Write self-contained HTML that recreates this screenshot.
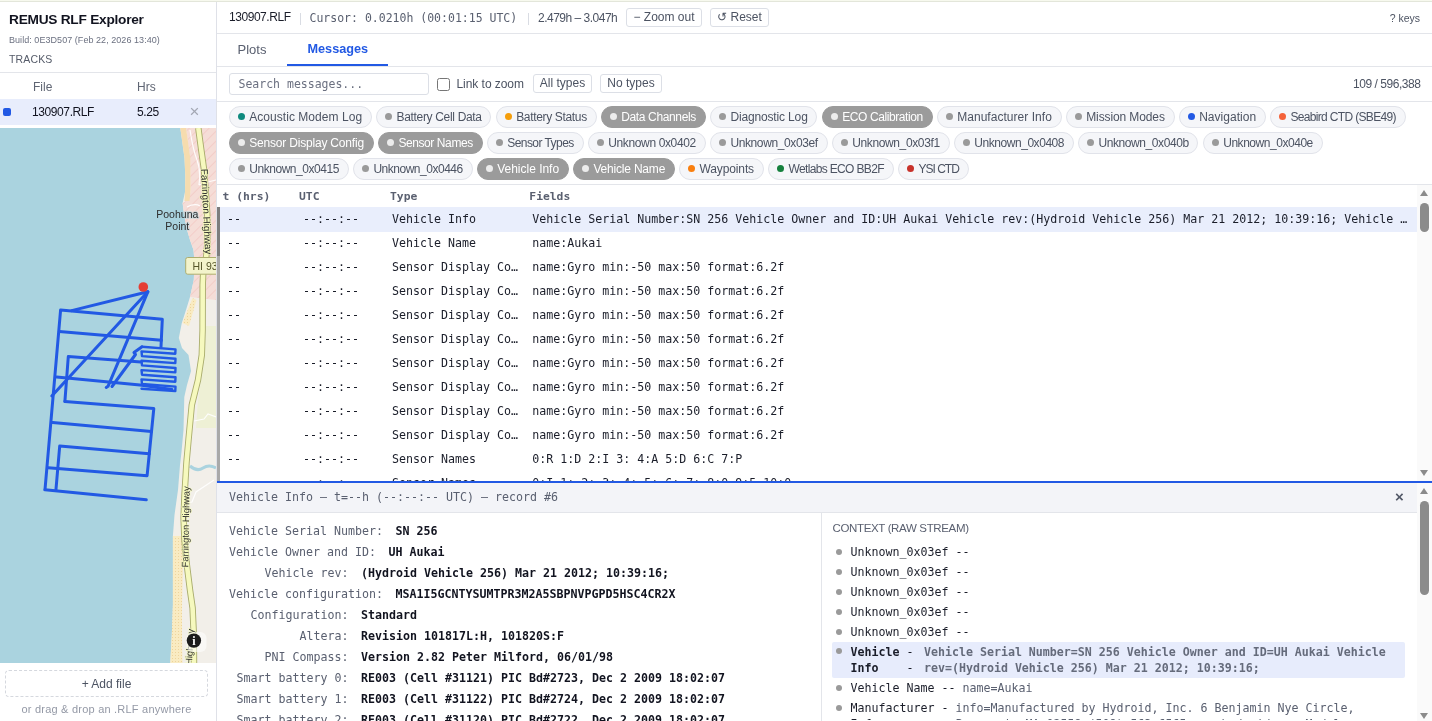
<!DOCTYPE html>
<html lang="en">
<head>
<meta charset="utf-8">
<title>REMUS RLF Explorer</title>
<style>
*{box-sizing:border-box;margin:0;padding:0}
html,body{width:1432px;height:721px;overflow:hidden;background:#fff}
body{font-family:"Liberation Sans",sans-serif;color:#1a1d29;position:relative;font-size:12px;will-change:transform}
.mono{font-family:"DejaVu Sans Mono","Liberation Mono",monospace}
.abs{position:absolute}
#topline{left:0;top:0;width:1432px;height:2px;background:linear-gradient(#f7f9ee 0,#f7f9ee 50%,#e3e6da 50%,#e3e6da 100%)}
/* sidebar */
#side{left:0;top:0;width:217px;height:721px;border-right:1px solid #dfe1e8;background:#fff}
#title{left:9px;top:12px;font-weight:bold;font-size:13.7px;letter-spacing:-0.25px;color:#11131f;white-space:nowrap}
#build{left:9px;top:35px;font-size:9px;letter-spacing:.05px;color:#6b7080;white-space:nowrap}
#tracks{left:9px;top:53px;font-size:10.5px;letter-spacing:.15px;color:#555b69;white-space:nowrap}
#sidehdr{left:0;top:72px;width:216px;height:27px;border-top:1px solid #e3e5ea;color:#5f6573;font-size:12px}
#siderow{left:0;top:99px;width:216px;height:26px;background:#e8edfc;font-size:12px;letter-spacing:-.4px;color:#11131f}
#map{left:0;top:128px;width:216px;height:535px;overflow:hidden;background:#aad3df}
#addfile{left:5px;top:670px;width:203px;height:27px;border:1px dashed #d5d8de;border-radius:4px;text-align:center;line-height:27px;font-size:12px;color:#4c5362}
#drag{left:0;top:703px;width:213px;text-align:center;font-size:11px;letter-spacing:.22px;color:#9499a6}
/* main */
#topbar{left:217px;top:2px;width:1215px;height:32px;border-bottom:1px solid #e3e5ea}
#tabs{left:217px;top:34px;width:1215px;height:33px;border-bottom:1px solid #e3e5ea}
#filter{left:217px;top:67px;width:1215px;height:35px;border-bottom:1px solid #e3e5ea}
#chips{left:217px;top:102px;width:1215px;height:83px;border-bottom:1px solid #e3e5ea}
.chip{position:absolute;height:22px;border:1px solid #e1e3ea;border-radius:11px;background:#f5f6f9;color:#4c5362;font-size:12px;line-height:20px;white-space:nowrap;padding-left:19.2px}
.chip i{position:absolute;left:8px;top:5.5px;width:7px;height:7px;border-radius:50%;background:#9a9a9a}
.chip.on{background:#9b9b9b;border-color:#9b9b9b;color:#fff}
.chip.on i{background:#ececec}
.btn{position:absolute;border:1px solid #dcdfe6;border-radius:3px;background:#fff;color:#4c5362;font-size:12px;white-space:nowrap;text-align:center}

#topbar .fn{left:12px;top:8px;font-size:12px;letter-spacing:-.45px;color:#1a1d29}
.sep{position:absolute;width:1px;height:12px;background:#d9dce3}
#cursor{left:92.5px;top:8.5px;font-size:11.5px;color:#5a6070;white-space:pre}
#range{left:321px;top:8.5px;font-size:12px;letter-spacing:-.5px;color:#4c5362;white-space:nowrap}
#keys{right:12px;top:10px;font-size:10.5px;color:#4c5362}
#tabs .t1{left:20.5px;top:8px;font-size:13px;color:#5a6070}
#tabs .t2{left:90.5px;top:8px;font-size:12.7px;font-weight:bold;color:#2259e4}
#tabs .ul{left:70px;top:30px;width:101px;height:2px;background:#2259e4}
#search{left:12px;top:6px;width:200px;height:22px;border:1px solid #dcdfe6;border-radius:3px;font-size:11.5px;color:#6b7080;line-height:20px;padding-left:8.5px}
#cb{left:220px;top:11px;width:13px;height:13px;border:1px solid #767676;border-radius:2.5px;background:#fff}
#ltz{left:239.5px;top:10px;font-size:12px;color:#4c5362;letter-spacing:-.05px;white-space:nowrap}
#count{right:11.5px;top:10px;font-size:12px;color:#4c5362;letter-spacing:-.45px;white-space:nowrap}

/* table */
#thead{left:217px;top:185px;width:1200px;height:22px;font-weight:bold;font-size:11.35px;color:#5a6070}
#thead span{position:absolute;top:4px;white-space:pre}
#tbody{left:217px;top:207px;width:1200px;height:274px;overflow:hidden;font-size:11.63px;color:#1a1d29}
.r{position:absolute;left:3px;width:1197px;height:24px;line-height:24px;white-space:pre}
.r.sel{background:#e9eefc;height:24.6px}
.r span{position:absolute;top:0;overflow:hidden}
.r .c1{left:7px}.r .c2{left:83px}.r .c3{left:172px}.r .c4{left:312.3px}
#lbar{left:217px;top:207px;width:3px;height:274px;background:#a9a9a9}
#lbar i{position:absolute;left:0;top:0;width:3px;height:49px;background:#7d7d7d}
.sbtrack{position:absolute;background:#fafafa}
.sbthumb{position:absolute;background:#8b8b8b;border-radius:5px}
.tri-up{position:absolute;width:0;height:0;border-left:4.6px solid transparent;border-right:4.6px solid transparent;border-bottom:6.5px solid #8b8b8b}
.tri-dn{position:absolute;width:0;height:0;border-left:4.6px solid transparent;border-right:4.6px solid transparent;border-top:6.5px solid #8b8b8b}
#blue{left:217px;top:481px;width:1215px;height:2px;background:#2259e4}
/* detail */
#dhead{left:217px;top:483px;width:1200px;height:30px;background:#f3f4f8;border-bottom:1px solid #e3e5ea;font-size:11.63px;color:#5a6070}
#dhead .t{position:absolute;left:12px;top:7px;white-space:pre}
#dhead .x{position:absolute;left:1178px;top:5px;font-family:"Liberation Sans",sans-serif;font-size:15px;font-weight:bold;color:#535968}
#dleft{left:217px;top:513px;width:605px;height:208px;overflow:hidden;font-size:11.63px;border-right:1px solid #e3e5ea}
.kv{position:absolute;left:12px;height:21px;line-height:21px;white-space:pre;display:flex}
.kv b{font-weight:bold;color:#11131f;margin-left:12.6px}
.kv span{min-width:119.5px;text-align:right;color:#5a6070}
#dright{left:823px;top:513px;width:594px;height:208px;overflow:hidden;font-size:11.63px}

#ctxh{position:absolute;left:9.5px;top:9px;font-family:"Liberation Sans",sans-serif;font-size:11.5px;letter-spacing:-.35px;color:#5a6070;white-space:nowrap}
.ci{position:absolute;left:9px;width:573px;white-space:pre;color:#1a1d29}
.ci i{position:absolute;left:4px;top:5px;width:6px;height:6px;border-radius:50%;background:#9a9a9a}
.ci span{position:absolute;left:18.5px;top:0;line-height:16.2px}
.ci em{font-style:normal;color:#5a6070}
.ci.hl{background:#e7ecfc;border-radius:2px}.ci.hl em{color:#656b7b}
</style>
</head>
<body>
<div id="side" class="abs">
  <div id="title" class="abs">REMUS RLF Explorer</div>
  <div id="build" class="abs">Build: 0E3D507 (Feb 22, 2026 13:40)</div>
  <div id="tracks" class="abs">TRACKS</div>
  <div id="sidehdr" class="abs"><span class="abs" style="left:33px;top:7px">File</span><span class="abs" style="left:137px;top:7px">Hrs</span></div>
  <div id="siderow" class="abs"><span class="abs" style="left:3px;top:9px;width:8px;height:8px;border-radius:2px;background:#2259e4"></span><span class="abs" style="left:32px;top:6px">130907.RLF</span><span class="abs" style="left:137px;top:6px">5.25</span><span class="abs" style="left:189.5px;top:3px;color:#a3a7b3;font-size:17px;letter-spacing:0">×</span></div>
  <div id="map" class="abs"><svg width="216" height="535" viewBox="0 128 216 535" style="position:absolute;left:0;top:0;display:block">
<defs>
<pattern id="hatch" width="7" height="7" patternUnits="userSpaceOnUse" patternTransform="rotate(-45)"><rect width="7" height="7" fill="#f5ddd7"/><rect width="7" height="0.8" fill="#f3cac4"/></pattern>
<pattern id="sand" width="3" height="3" patternUnits="userSpaceOnUse"><rect width="3" height="3" fill="#f9ebc2"/><rect x="1" y="1" width="1" height="1" fill="#edd49c"/></pattern>
</defs>
<rect x="0" y="128" width="216" height="535" fill="#aad3df"/>
<!-- land -->
<path d="M180.3,128 L182,140 L184.5,158 L185.3,176 L185,192 L182.6,203 L184,214 L186.5,228 L190,240 L193.5,250 L194.5,262 L193.8,280 L190,297 L186,310 L181.8,323 L178.8,338 L182,348 L188.5,355 L191,371 L187,385 L184.3,397 L183.5,430 L181.5,452 L180,465 L178,490 L174.5,515 L172.9,536 L172.9,605 L171.8,635 L170.3,663 L216,663 L216,128 Z" fill="#f2efe9"/>
<!-- pink hatched -->
<path d="M186,128 L190,158 L190.5,192 L186,201 L182.6,203 L184,214 L186.5,228 L190,240 L193.5,250 L194.5,262 L193.8,280 L190,297 L216,300 L216,128 Z" fill="url(#hatch)"/>
<!-- beach top -->
<path d="M180.3,128 L182,140 L184.5,158 L185.3,176 L185,192 L184.5,201 L189.5,201 L190.5,190 L190.3,158 L186,128 Z" fill="#f6dcae"/>
<path d="M192.5,298 L196.5,300 L189,326 L182.5,323 Z" fill="url(#sand)"/>
<!-- farmland -->
<path d="M206,326 L216,326 L216,428 L196,428 L198,400 L203,365 Z" fill="#eef0d5"/>
<!-- stream -->
<path d="M190,466 Q197,472 203,468 T216,468" fill="none" stroke="#aad3df" stroke-width="3"/>
<!-- beach bottom -->
<path d="M172.9,536 L183.5,536 L183,570 L182,605 L182,635 L182.5,663 L170.3,663 L171.8,635 L172.9,605 Z" fill="url(#sand)"/>
<!-- minor white roads -->
<path d="M190,130 Q193,150 197,160 T199,185 M199,185 Q206,182 216,180 M187,207 Q195,203 200,206" fill="none" stroke="#fff" stroke-width="1.2" opacity=".9"/>
<path d="M194,421 L204,419 L208,414 L216,417 M186,503 L192,502 L196,492 L214,480" fill="none" stroke="#fff" stroke-width="1.2" opacity=".9"/>
<!-- highway -->
<path id="hwy" d="M198.3,128 L201,148 L203.8,168 L205.8,192 L207.3,215 L207.4,243 L206.3,256 L203.3,271 L202.7,285 L202.6,330 L201.8,355 L198,380 L191.8,405 L188.5,440 L186.5,462 L184.5,495 L183.6,518 L184.5,540 L186.5,562 L190,590 L192.6,608 L193.8,635 L194,663" fill="none" stroke="#a9ac6c" stroke-width="6.4" stroke-linejoin="round"/>
<path d="M198.3,128 L201,148 L203.8,168 L205.8,192 L207.3,215 L207.4,243 L206.3,256 L203.3,271 L202.7,285 L202.6,330 L201.8,355 L198,380 L191.8,405 L188.5,440 L186.5,462 L184.5,495 L183.6,518 L184.5,540 L186.5,562 L190,590 L192.6,608 L193.8,635 L194,663" fill="none" stroke="#f6f9be" stroke-width="4.6" stroke-linejoin="round"/>
<!-- labels -->
<g font-family="'Liberation Sans',sans-serif" fill="#2d2d2d">
<text x="177.3" y="218" font-size="10.5" text-anchor="middle" stroke="#aad3df" stroke-width="1.5" paint-order="stroke" stroke-opacity=".6">Poohuna</text>
<text x="177.3" y="230" font-size="10.5" text-anchor="middle" stroke="#aad3df" stroke-width="1.5" paint-order="stroke" stroke-opacity=".6">Point</text>
<text font-size="9.9" transform="translate(201,169) rotate(87.2)" stroke="#f6f9be" stroke-width="1.6" paint-order="stroke" stroke-opacity=".75">Farrington Highway</text>
<text font-size="9.4" transform="translate(188.2,567.5) rotate(-89)" stroke="#f6f9be" stroke-width="1.6" paint-order="stroke" stroke-opacity=".75">Farrington Highway</text>
<text font-size="9.4" transform="translate(192,665) rotate(-87)" stroke="#f6f9be" stroke-width="1.6" paint-order="stroke" stroke-opacity=".75">Highway</text>
</g>
<!-- shield -->
<rect x="185.7" y="257.5" width="40" height="16.7" rx="2" fill="#f3f3cb" stroke="#adad6e" stroke-width="1"/>
<text x="192.5" y="270" font-family="'Liberation Sans',sans-serif" font-size="10.5" fill="#55552a">HI 93</text>
<!-- track -->
<g fill="none" stroke="#2259e4" stroke-width="3" stroke-linejoin="round" stroke-linecap="round">
<path d="M147.8,291.8 L71.6,310.6"/>
<path d="M147.8,291.8 L51.8,396"/>
<path d="M147.8,291.8 L108,386.3 L106.2,387.5"/>
<path d="M112,386.5 L135.5,354.5 L134,352.5 L142,346.8"/>
<path d="M45,489.6 L60.6,309.9 L162.3,319.2 L161,347"/>
<path d="M59.3,331.5 L161.4,340.3"/>
<path d="M64.9,401.4 L68.3,356.5 L141,362"/>
<path d="M56.6,377.1 L140,385 L172,389.5"/>
<path d="M64.9,401.4 L153.8,408.6 L147.1,475.7 L48.2,467.8"/>
<path d="M52.6,422.4 L151.4,431.5"/>
<path d="M55.9,490.4 L59.7,446.1 L149.2,453.8"/>
<path d="M45,489.8 L146.3,499.8"/>
<polyline points="142.0,346.8 175.5,349.4 175.3,353.8 141.5,351.4 142.0,356.1 175.5,358.7 175.3,363.1 141.5,360.8 142.0,365.4 175.5,368.0 175.3,372.4 141.5,370.1 142.0,374.7 175.5,377.3 175.3,381.8 141.5,379.4 142.0,384.0 175.5,386.6 175.3,391.1 141.5,388.7" stroke-width="2.4"/>
</g>
<circle cx="143.3" cy="287" r="4.8" fill="#e53e34"/>
<!-- info -->
<rect x="186.5" y="632" width="20" height="20" rx="6" fill="#fff" opacity=".55"/>
<circle cx="193.9" cy="640.6" r="7.2" fill="#1c1c1c"/>
<text x="193.9" y="645" font-family="'Liberation Serif',serif" font-weight="bold" font-size="12" fill="#fff" text-anchor="middle">i</text>
</svg></div>
  <div id="addfile" class="abs">+ Add file</div>
  <div id="drag" class="abs">or drag &amp; drop an .RLF anywhere</div>
</div>
<div id="topline" class="abs"></div>
<div id="topbar" class="abs"><span class="abs fn">130907.RLF</span><span class="sep" style="left:82.5px;top:11px"></span><span id="cursor" class="abs mono">Cursor: 0.0210h (00:01:15 UTC)</span><span class="sep" style="left:311px;top:11px"></span><span id="range" class="abs">2.479h – 3.047h</span><span class="btn" style="left:409px;top:6px;width:76px;height:19px;line-height:17px">− Zoom out</span><span class="btn" style="left:493px;top:6px;width:59px;height:19px;line-height:17px">↺ Reset</span><span id="keys" class="abs">? keys</span></div>
<div id="tabs" class="abs"><span class="abs t1">Plots</span><span class="abs t2">Messages</span><span class="abs ul"></span></div>
<div id="filter" class="abs"><span id="search" class="abs mono">Search messages...</span><span id="cb" class="abs"></span><span id="ltz" class="abs">Link to zoom</span><span class="btn" style="left:316px;top:7px;width:59px;height:19px;line-height:17px">All types</span><span class="btn" style="left:383px;top:7px;width:62px;height:19px;line-height:17px">No types</span><span id="count" class="abs">109 / 596,388</span></div>
<div id="chips" class="abs"><span class="chip" style="left:12.0px;top:4px;width:143.0px;letter-spacing:0.05px"><i style="background:#0f8a7e"></i>Acoustic Modem Log</span>
<span class="chip" style="left:159.4px;top:4px;width:115.1px;letter-spacing:-0.33px"><i></i>Battery Cell Data</span>
<span class="chip" style="left:279.0px;top:4px;width:100.6px;letter-spacing:-0.34px"><i style="background:#f59e0b"></i>Battery Status</span>
<span class="chip on" style="left:384.0px;top:4px;width:104.7px;letter-spacing:-0.36px"><i></i>Data Channels</span>
<span class="chip" style="left:493.2px;top:4px;width:107.3px;letter-spacing:-0.15px"><i></i>Diagnostic Log</span>
<span class="chip on" style="left:605.0px;top:4px;width:110.6px;letter-spacing:-0.41px"><i></i>ECO Calibration</span>
<span class="chip" style="left:720.0px;top:4px;width:124.7px;letter-spacing:0.04px"><i></i>Manufacturer Info</span>
<span class="chip" style="left:849.0px;top:4px;width:108.6px;letter-spacing:-0.11px"><i></i>Mission Modes</span>
<span class="chip" style="left:962.0px;top:4px;width:86.9px;letter-spacing:0.02px"><i style="background:#2259e4"></i>Navigation</span>
<span class="chip" style="left:1053.2px;top:4px;width:135.6px;letter-spacing:-0.66px"><i style="background:#f4623a"></i>Seabird CTD (SBE49)</span>
<span class="chip on" style="left:12.0px;top:30px;width:144.8px;letter-spacing:-0.19px"><i></i>Sensor Display Config</span>
<span class="chip on" style="left:161.2px;top:30px;width:104.4px;letter-spacing:-0.41px"><i></i>Sensor Names</span>
<span class="chip" style="left:270.0px;top:30px;width:96.5px;letter-spacing:-0.55px"><i></i>Sensor Types</span>
<span class="chip" style="left:371.0px;top:30px;width:117.7px;letter-spacing:-0.36px"><i></i>Unknown 0x0402</span>
<span class="chip" style="left:493.2px;top:30px;width:117.4px;letter-spacing:-0.38px"><i></i>Unknown_0x03ef</span>
<span class="chip" style="left:615.0px;top:30px;width:117.6px;letter-spacing:-0.37px"><i></i>Unknown_0x03f1</span>
<span class="chip" style="left:737.1px;top:30px;width:119.7px;letter-spacing:-0.45px"><i></i>Unknown_0x0408</span>
<span class="chip" style="left:861.3px;top:30px;width:120.2px;letter-spacing:-0.42px"><i></i>Unknown_0x040b</span>
<span class="chip" style="left:986.0px;top:30px;width:119.6px;letter-spacing:-0.46px"><i></i>Unknown_0x040e</span>
<span class="chip" style="left:12.0px;top:56px;width:119.7px;letter-spacing:-0.45px"><i></i>Unknown_0x0415</span>
<span class="chip" style="left:136.2px;top:56px;width:119.4px;letter-spacing:-0.48px"><i></i>Unknown_0x0446</span>
<span class="chip on" style="left:260.0px;top:56px;width:91.9px;letter-spacing:-0.01px"><i></i>Vehicle Info</span>
<span class="chip on" style="left:356.2px;top:56px;width:101.8px;letter-spacing:-0.19px"><i></i>Vehicle Name</span>
<span class="chip" style="left:462.4px;top:56px;width:84.4px;letter-spacing:-0.13px"><i style="background:#f97f0f"></i>Waypoints</span>
<span class="chip" style="left:551.3px;top:56px;width:125.4px;letter-spacing:-0.65px"><i style="background:#15803d"></i>Wetlabs ECO BB2F</span>
<span class="chip" style="left:681.2px;top:56px;width:70.5px;letter-spacing:-0.98px"><i style="background:#c8322b"></i>YSI CTD</span></div>
<div id="thead" class="abs mono"><span style="left:5.5px">t (hrs)</span><span style="left:82px">UTC</span><span style="left:173px">Type</span><span style="left:312.3px">Fields</span></div>
<div id="tbody" class="abs mono">
<div class="r sel" style="top:0.0px"><span class="c1">--</span><span class="c2">--:--:--</span><span class="c3">Vehicle Info</span><span class="c4">Vehicle Serial Number:SN 256 Vehicle Owner and ID:UH Aukai Vehicle rev:(Hydroid Vehicle 256) Mar 21 2012; 10:39:16; Vehicle …</span></div>
<div class="r" style="top:24.0px"><span class="c1">--</span><span class="c2">--:--:--</span><span class="c3">Vehicle Name</span><span class="c4">name:Aukai</span></div>
<div class="r" style="top:48.1px"><span class="c1">--</span><span class="c2">--:--:--</span><span class="c3">Sensor Display Co…</span><span class="c4">name:Gyro min:-50 max:50 format:6.2f</span></div>
<div class="r" style="top:72.1px"><span class="c1">--</span><span class="c2">--:--:--</span><span class="c3">Sensor Display Co…</span><span class="c4">name:Gyro min:-50 max:50 format:6.2f</span></div>
<div class="r" style="top:96.1px"><span class="c1">--</span><span class="c2">--:--:--</span><span class="c3">Sensor Display Co…</span><span class="c4">name:Gyro min:-50 max:50 format:6.2f</span></div>
<div class="r" style="top:120.2px"><span class="c1">--</span><span class="c2">--:--:--</span><span class="c3">Sensor Display Co…</span><span class="c4">name:Gyro min:-50 max:50 format:6.2f</span></div>
<div class="r" style="top:144.2px"><span class="c1">--</span><span class="c2">--:--:--</span><span class="c3">Sensor Display Co…</span><span class="c4">name:Gyro min:-50 max:50 format:6.2f</span></div>
<div class="r" style="top:168.2px"><span class="c1">--</span><span class="c2">--:--:--</span><span class="c3">Sensor Display Co…</span><span class="c4">name:Gyro min:-50 max:50 format:6.2f</span></div>
<div class="r" style="top:192.2px"><span class="c1">--</span><span class="c2">--:--:--</span><span class="c3">Sensor Display Co…</span><span class="c4">name:Gyro min:-50 max:50 format:6.2f</span></div>
<div class="r" style="top:216.3px"><span class="c1">--</span><span class="c2">--:--:--</span><span class="c3">Sensor Display Co…</span><span class="c4">name:Gyro min:-50 max:50 format:6.2f</span></div>
<div class="r" style="top:240.3px"><span class="c1">--</span><span class="c2">--:--:--</span><span class="c3">Sensor Names</span><span class="c4">0:R 1:D 2:I 3: 4:A 5:D 6:C 7:P</span></div>
<div class="r" style="top:264.3px"><span class="c1">--</span><span class="c2">--:--:--</span><span class="c3">Sensor Names</span><span class="c4">0:I 1: 2: 3: 4: 5: 6: 7: 8:0 9:5 10:0</span></div>
</div>
<div id="lbar" class="abs"><i></i></div>
<div class="sbtrack" style="left:1417px;top:185px;width:15px;height:296px"></div>
<div class="tri-up" style="left:1420px;top:190px"></div>
<div class="sbthumb" style="left:1420px;top:203px;width:9px;height:29px"></div>
<div class="tri-dn" style="left:1420px;top:470px"></div>
<div id="blue" class="abs"></div>
<!--TABLE_END-->
<div id="dhead" class="abs mono"><span class="t">Vehicle Info — t=--h (--:--:-- UTC) — record #6</span><span class="x">×</span></div>
<div id="dleft" class="abs mono">
<div class="kv" style="top:7.5px"><span>Vehicle Serial Number:</span><b>SN 256</b></div>
<div class="kv" style="top:28.6px"><span>Vehicle Owner and ID:</span><b>UH Aukai</b></div>
<div class="kv" style="top:49.7px"><span>Vehicle rev:</span><b>(Hydroid Vehicle 256) Mar 21 2012; 10:39:16;</b></div>
<div class="kv" style="top:70.8px"><span>Vehicle configuration:</span><b>MSA1I5GCNTYSUMTPR3M2A5SBPNVPGPD5HSC4CR2X</b></div>
<div class="kv" style="top:91.9px"><span>Configuration:</span><b>Standard</b></div>
<div class="kv" style="top:113.0px"><span>Altera:</span><b>Revision 101817L:H, 101820S:F</b></div>
<div class="kv" style="top:134.1px"><span>PNI Compass:</span><b>Version 2.82 Peter Milford, 06/01/98</b></div>
<div class="kv" style="top:155.2px"><span>Smart battery 0:</span><b>RE003 (Cell #31121) PIC Bd#2723, Dec 2 2009 18:02:07</b></div>
<div class="kv" style="top:176.3px"><span>Smart battery 1:</span><b>RE003 (Cell #31122) PIC Bd#2724, Dec 2 2009 18:02:07</b></div>
<div class="kv" style="top:197.4px"><span>Smart battery 2:</span><b>RE003 (Cell #31120) PIC Bd#2722, Dec 2 2009 18:02:07</b></div>
</div>
<div id="dright" class="abs mono"><div id="ctxh">CONTEXT (RAW STREAM)</div>
<div class="ci" style="top:30.7px;height:20px"><i></i><span>Unknown_0x03ef --</span></div>
<div class="ci" style="top:50.7px;height:20px"><i></i><span>Unknown_0x03ef --</span></div>
<div class="ci" style="top:70.7px;height:20px"><i></i><span>Unknown_0x03ef --</span></div>
<div class="ci" style="top:90.8px;height:20px"><i></i><span>Unknown_0x03ef --</span></div>
<div class="ci" style="top:110.8px;height:20px"><i></i><span>Unknown_0x03ef --</span></div>
<div class="ci hl" style="top:129px;height:35.8px"><i style="top:5.5px"></i><span style="top:1.8px"><b>Vehicle</b> - <em style="margin-left:3.4px"><b>Vehicle Serial Number=SN 256 Vehicle Owner and ID=UH Aukai Vehicle</b></em>
<b>Info</b>    - <em style="margin-left:3.4px"><b>rev=(Hydroid Vehicle 256) Mar 21 2012; 10:39:16;</b></em></span></div>
<div class="ci" style="top:167.0px;height:20px"><i></i><span>Vehicle Name -- <em>name=Aukai</em></span></div>
<div class="ci" style="top:187px;height:20.4px;overflow:hidden"><i></i><span>Manufacturer - <em>info=Manufactured by Hydroid, Inc. 6 Benjamin Nye Circle,</em>
Info         - <em>Pocasset, MA 02559 (508) 563-6565 www.hydroid.com Model:</em></span></div></div>
<div class="sbtrack" style="left:1417px;top:483px;width:15px;height:238px"></div>
<div class="tri-up" style="left:1420px;top:488px"></div>
<div class="sbthumb" style="left:1420px;top:501px;width:9px;height:93.5px"></div>
<div class="tri-dn" style="left:1420px;top:713px"></div>
<!--DETAIL_END-->
</body>
</html>
